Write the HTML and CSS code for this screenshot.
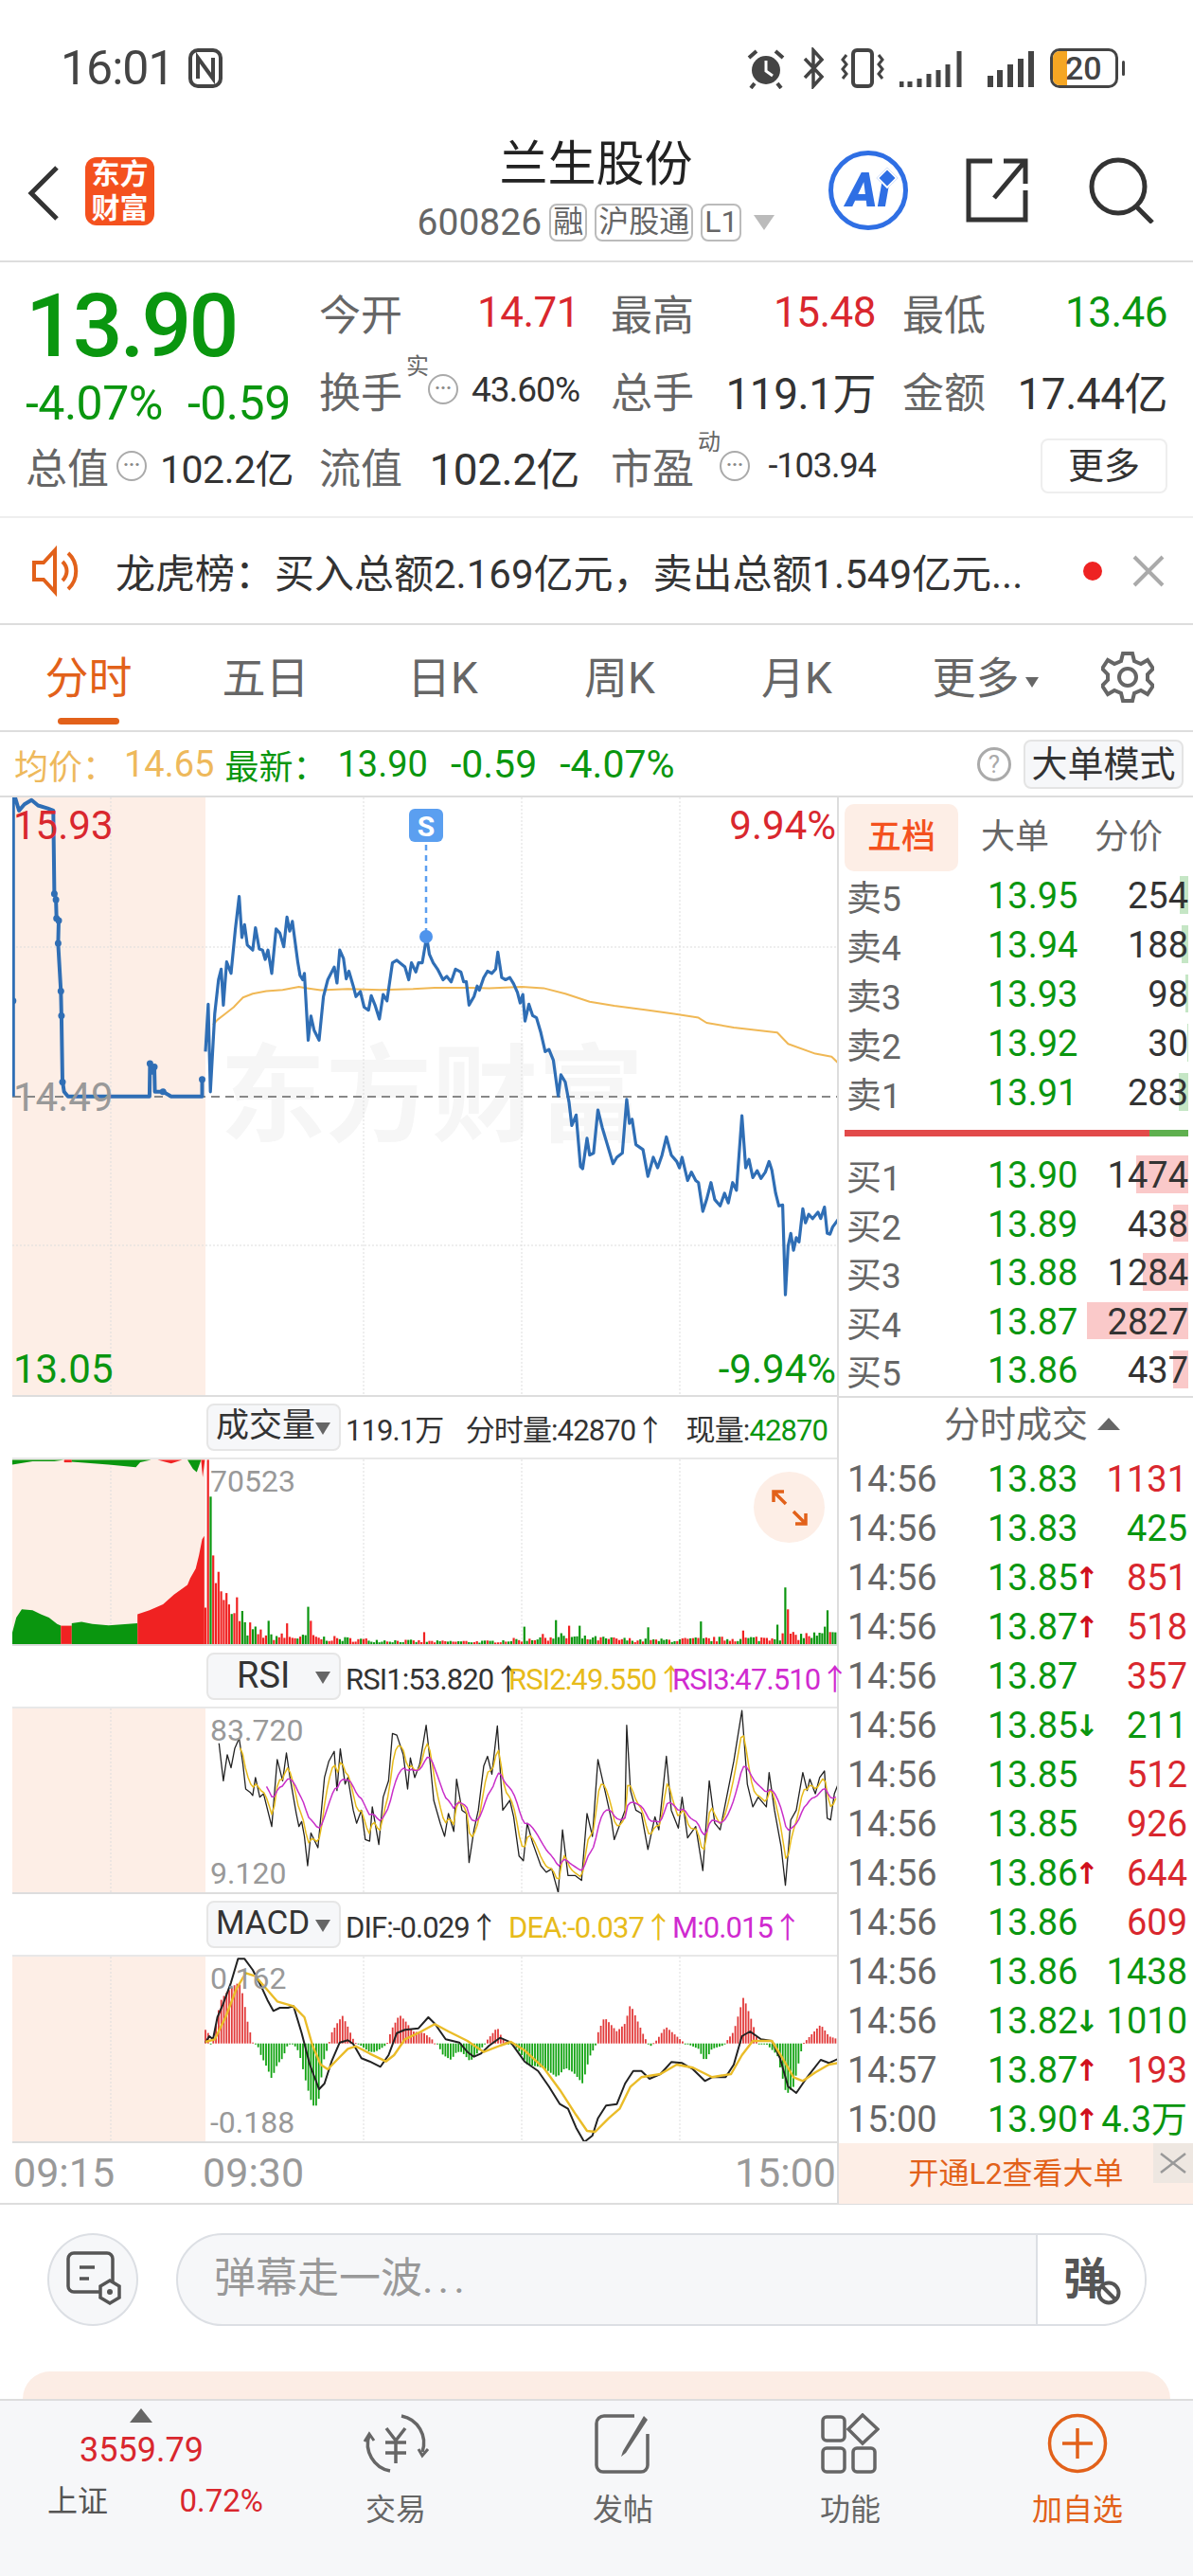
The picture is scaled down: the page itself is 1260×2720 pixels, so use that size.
FILE: index.html
```html
<!DOCTYPE html>
<html lang="zh-CN">
<head>
  <meta charset="UTF-8" />
  <title>兰生股份</title>
  <link rel="stylesheet" href="styles.css">
</head>
<body>

  <div class="statusbar">
    <div class="status-left">
      <span class="clock">16:01</span>
      <svg class="ico" width="36" height="42" viewBox="0 0 36 42"><rect x="2" y="2" width="32" height="38" rx="8" fill="none" stroke="#444" stroke-width="4"/><path d="M10 32V10l16 22V10" fill="none" stroke="#444" stroke-width="4"/></svg>
    </div>
    <div class="status-right">
      <svg width="44" height="44" viewBox="0 0 44 44"><circle cx="22" cy="24" r="15" fill="#444"/><path d="M22 14v11l7 5" fill="none" stroke="#fff" stroke-width="3"/><path d="M4 11l8-7M40 11l-8-7M10 38l-4 5M34 38l4 5" stroke="#444" stroke-width="4"/></svg>
      <svg width="24" height="44" viewBox="0 0 24 44"><path d="M3 12l18 19-9 10V3l9 10-18 19" fill="none" stroke="#444" stroke-width="3.5"/></svg>
      <svg class="vibrate" width="48" height="44" viewBox="0 0 48 44"><rect x="14" y="3" width="20" height="38" rx="4" fill="none" stroke="#444" stroke-width="4"/><path d="M7 8l-4 5 4 5-4 5 4 5-4 5M41 8l4 5-4 5 4 5-4 5 4 5" fill="none" stroke="#444" stroke-width="3"/></svg>
      <svg class="signal" width="68" height="44" viewBox="0 0 68 44"><path d="M2 36v6M11 36v6M21 33v9M31 28v14M41 24v18M51 18v24M63 4v38" stroke="#444" stroke-width="5"/></svg>
      <svg class="signal2" width="50" height="44" viewBox="0 0 50 44"><path d="M3 30v12M13 24v18M24 18v24M35 12v30M46 4v38" stroke="#444" stroke-width="6"/></svg>
      <span class="battery"><span class="battery-fill"></span><span class="battery-num">20</span></span>
      <span class="battery-nub"></span>
    </div>
  </div>

  <header class="topbar">
    <svg class="back" width="34" height="60" viewBox="0 0 34 60"><path d="M31 3L4 30l27 27" fill="none" stroke="#333" stroke-width="5"/></svg>
    <div class="logo">东方<br>财富</div>
    <div class="title">
      <div class="title-name">兰生股份</div>
      <div class="title-sub">
        <span class="code">600826</span>
        <span class="tag">融</span>
        <span class="tag">沪股通</span>
        <span class="tag">L1</span>
        <span class="title-caret"></span>
      </div>
    </div>
    <div class="top-actions">
      <div class="ai">Ai</div>
      <svg class="share" width="66" height="68" viewBox="0 0 66 68"><path d="M28 3H3v62h60V34M30 42L62 4M40 3h23v24" fill="none" stroke="#333" stroke-width="5"/></svg>
      <svg class="search" width="70" height="70" viewBox="0 0 70 70"><circle cx="32" cy="31" r="28" fill="none" stroke="#333" stroke-width="5"/><path d="M51 52l17 17" stroke="#333" stroke-width="5"/></svg>
    </div>
  </header>

  <section class="quote">
    <div class="q-price">13.90</div>
    <div class="q-cell"><span class="q-label">今开</span><span class="q-val red">14.71</span></div>
    <div class="q-cell"><span class="q-label">最高</span><span class="q-val red">15.48</span></div>
    <div class="q-cell"><span class="q-label">最低</span><span class="q-val green">13.46</span></div>

    <div class="q-change"><span>-4.07%</span><span>-0.59</span></div>
    <div class="q-cell">
      <span class="q-label">换手<sup>实</sup></span><span class="dots">···</span><span class="q-val q-small">43.60%</span>
    </div>
    <div class="q-cell"><span class="q-label">总手</span><span class="q-val q-unit">119.1万</span></div>
    <div class="q-cell"><span class="q-label">金额</span><span class="q-val q-unit">17.44亿</span></div>

    <div class="q-cell q-first"><span class="q-label">总值</span><span class="dots dots-tight">···</span><span class="q-val q-mid">102.2亿</span></div>
    <div class="q-cell"><span class="q-label">流值</span><span class="q-val q-unit">102.2亿</span></div>
    <div class="q-cell">
      <span class="q-label">市盈<sup>动</sup></span><span class="dots">···</span><span class="q-val q-tiny">-103.94</span>
    </div>
    <div class="q-more"><button class="more-btn">更多</button></div>
  </section>

  <section class="notice">
    <svg width="54" height="54" viewBox="0 0 54 54"><path d="M4 18h10L26 5v44L14 36H4z" fill="none" stroke="#e2611a" stroke-width="4"/><path d="M34 17c6 6 6 14 0 20M40 8c11 10 11 28 0 38" fill="none" stroke="#e2611a" stroke-width="4"/></svg>
    <span class="notice-text">龙虎榜：买入总额2.169亿元，卖出总额1.549亿元...</span>
    <span class="notice-dot"></span>
    <svg width="34" height="34" viewBox="0 0 34 34"><path d="M2 2l30 30M32 2L2 32" stroke="#aaa" stroke-width="4"/></svg>
  </section>

  <nav class="tabs">
    <div class="tab active">分时</div>
    <div class="tab">五日</div>
    <div class="tab">日K</div>
    <div class="tab">周K</div>
    <div class="tab">月K</div>
    <div class="tab tab-more">更多<span class="tab-caret"></span></div>
    <div class="tab-gear">
      <svg width="56" height="56" viewBox="0 0 56 56"><path d="M23 3h10l2 8 7 3 7-4 6 9-6 6v6l6 6-6 9-7-4-7 3-2 8H23l-2-8-7-3-7 4-6-9 6-6v-6L1 19l6-9 7 4 7-3z" fill="none" stroke="#666" stroke-width="4"/><circle cx="28" cy="28" r="9" fill="none" stroke="#666" stroke-width="4"/></svg>
    </div>
  </nav>

  <div class="inforow">
    <span class="avg">均价：</span><span class="avg avg-num">14.65</span>
    <span class="latest">最新：</span><span class="latest latest-first">13.90</span><span class="latest latest-num">-0.59</span><span class="latest latest-num">-4.07%</span>
    <span class="help">?</span>
    <button class="mode-btn">大单模式</button>
  </div>

  <div class="board">
    <div class="charts">
      <div class="plot-wrap plot-price">
        <svg id="priceChart" class="plot" width="873" height="631"></svg>
        <div class="watermark">东方财富</div>
        <span class="axis big red tl">15.93</span>
        <span class="axis big gray ml">14.49</span>
        <span class="axis big green bl">13.05</span>
        <span class="axis big red tr">9.94%</span>
        <span class="axis big green br">-9.94%</span>
      </div>

      <div class="pane-head">
        <div class="pick">成交量<span class="pick-caret"></span></div>
        <div class="pane-vals spread">
          <span>119.1万</span>
          <span>分时量:42870↑</span>
          <span>现量:<b class="green">42870</b></span>
        </div>
      </div>
      <div class="plot-wrap plot-small">
        <svg id="volChart" class="plot" width="873" height="195"></svg>
        <span class="axis small gray at-top">70523</span>
        <div class="expand">
          <svg width="40" height="40" viewBox="0 0 40 40"><path d="M3 14V3h11M3 3l13 13M37 26v11H26M37 37L24 24" fill="none" stroke="#e2611a" stroke-width="3.5"/></svg>
        </div>
      </div>

      <div class="pane-head">
        <div class="pick pick-wide">RSI<span class="pick-caret"></span></div>
        <div class="pane-vals thirds">
          <span>RSI1:53.820↑</span>
          <span class="c-yellow">RSI2:49.550↑</span>
          <span class="c-magenta">RSI3:47.510↑</span>
        </div>
      </div>
      <div class="plot-wrap plot-rsi">
        <svg id="rsiChart" class="plot" width="873" height="194"></svg>
        <span class="axis small gray at-top">83.720</span>
        <span class="axis small gray at-bottom">9.120</span>
      </div>

      <div class="pane-head">
        <div class="pick">MACD<span class="pick-caret"></span></div>
        <div class="pane-vals thirds">
          <span>DIF:-0.029↑</span>
          <span class="c-yellow">DEA:-0.037↑</span>
          <span class="c-magenta">M:0.015↑</span>
        </div>
      </div>
      <div class="plot-wrap plot-small">
        <svg id="macdChart" class="plot" width="873" height="195"></svg>
        <span class="axis small gray at-top">0.162</span>
        <span class="axis small gray at-bottom">-0.188</span>
      </div>

      <div class="timeline">
        <span>09:15</span>
        <span>09:30</span>
        <span class="timeline-end">15:00</span>
      </div>
    </div>

    <aside class="side">
      <div class="side-tabs">
        <div class="side-tab active">五档</div>
        <div class="side-tab">大单</div>
        <div class="side-tab">分价</div>
      </div>

      <div class="depth depth-sell">
        <div class="depth-row"><span class="depth-bar ask" style="width:9px"></span><span class="d-label">卖5</span><span class="green">13.95</span><span class="d-vol">254</span></div>
        <div class="depth-row"><span class="depth-bar ask" style="width:7px"></span><span class="d-label">卖4</span><span class="green">13.94</span><span class="d-vol">188</span></div>
        <div class="depth-row"><span class="depth-bar ask" style="width:3px"></span><span class="d-label">卖3</span><span class="green">13.93</span><span class="d-vol">98</span></div>
        <div class="depth-row"><span class="depth-bar ask" style="width:1px"></span><span class="d-label">卖2</span><span class="green">13.92</span><span class="d-vol">30</span></div>
        <div class="depth-row"><span class="depth-bar ask" style="width:10px"></span><span class="d-label">卖1</span><span class="green">13.91</span><span class="d-vol">283</span></div>
      </div>

      <div class="ratio"><span class="ratio-buy"></span><span class="ratio-sell"></span></div>

      <div class="depth depth-buy">
        <div class="depth-row"><span class="depth-bar bid" style="width:55px"></span><span class="d-label">买1</span><span class="green">13.90</span><span class="d-vol">1474</span></div>
        <div class="depth-row"><span class="depth-bar bid" style="width:16px"></span><span class="d-label">买2</span><span class="green">13.89</span><span class="d-vol">438</span></div>
        <div class="depth-row"><span class="depth-bar bid" style="width:48px"></span><span class="d-label">买3</span><span class="green">13.88</span><span class="d-vol">1284</span></div>
        <div class="depth-row"><span class="depth-bar bid" style="width:107px"></span><span class="d-label">买4</span><span class="green">13.87</span><span class="d-vol">2827</span></div>
        <div class="depth-row"><span class="depth-bar bid" style="width:16px"></span><span class="d-label">买5</span><span class="green">13.86</span><span class="d-vol">437</span></div>
      </div>

      <div class="trades-head">分时成交<span class="up-caret"></span></div>
      <div class="trades">
        <div class="trade"><span>14:56</span><span class="green">13.83</span><span></span><span class="red">1131</span></div>
        <div class="trade"><span>14:56</span><span class="green">13.83</span><span></span><span class="green">425</span></div>
        <div class="trade"><span>14:56</span><span class="green">13.85</span><span class="arrow up">↑</span><span class="red">851</span></div>
        <div class="trade"><span>14:56</span><span class="green">13.87</span><span class="arrow up">↑</span><span class="red">518</span></div>
        <div class="trade"><span>14:56</span><span class="green">13.87</span><span></span><span class="red">357</span></div>
        <div class="trade"><span>14:56</span><span class="green">13.85</span><span class="arrow down">↓</span><span class="green">211</span></div>
        <div class="trade"><span>14:56</span><span class="green">13.85</span><span></span><span class="red">512</span></div>
        <div class="trade"><span>14:56</span><span class="green">13.85</span><span></span><span class="red">926</span></div>
        <div class="trade"><span>14:56</span><span class="green">13.86</span><span class="arrow up">↑</span><span class="red">644</span></div>
        <div class="trade"><span>14:56</span><span class="green">13.86</span><span></span><span class="red">609</span></div>
        <div class="trade"><span>14:56</span><span class="green">13.86</span><span></span><span class="green">1438</span></div>
        <div class="trade"><span>14:56</span><span class="green">13.82</span><span class="arrow down">↓</span><span class="green">1010</span></div>
        <div class="trade"><span>14:57</span><span class="green">13.87</span><span class="arrow up">↑</span><span class="red">193</span></div>
        <div class="trade"><span>15:00</span><span class="green">13.90</span><span class="arrow up">↑</span><span class="green">4.3万</span></div>
      </div>

      <div class="l2bar">
        开通L2查看大单
        <span class="l2close"><svg width="30" height="24" viewBox="0 0 30 24"><path d="M2 2l26 20M28 2L2 22" stroke="#999" stroke-width="2.5"/></svg></span>
      </div>
    </aside>
  </div>

  <div class="danmu">
    <div class="danmu-set">
      <svg width="60" height="62" viewBox="0 0 60 62"><path d="M44 44H10a6 6 0 0 1-6-6V9a6 6 0 0 1 6-6h35a6 6 0 0 1 6 6v24" fill="none" stroke="#555" stroke-width="3.5"/><path d="M16 18h16M16 30h10" stroke="#555" stroke-width="3.5"/><path d="M48 32l10 6v12l-10 6-10-6V38z" fill="#f6f7f9" stroke="#555" stroke-width="3.5"/><circle cx="48" cy="44" r="3" fill="#555"/></svg>
    </div>
    <div class="danmu-input">
      <span class="danmu-hint">弹幕走一波<span class="danmu-dots">...</span></span>
      <span class="danmu-send">弹<svg class="danmu-off" width="26" height="26" viewBox="0 0 26 26"><circle cx="13" cy="13" r="10.5" fill="#fff" stroke="#555" stroke-width="4"/><path d="M6 6l14 14" stroke="#555" stroke-width="4"/></svg></span>
    </div>
  </div>

  <div class="peek"></div>

  <footer class="bottombar">
    <div class="index">
      <span class="index-caret"></span>
      <div class="index-val">3559.79</div>
      <div class="index-row"><span class="index-name">上证</span><span class="index-pct">0.72%</span></div>
    </div>
    <div class="act">
      <svg width="72" height="64" viewBox="0 0 72 64"><path d="M42 3a29 29 0 0 1 22 38M30 61A29 29 0 0 1 8 23" fill="none" stroke="#666" stroke-width="3.5"/><path d="M3 30l5-8 5 7M60 38l4 7 6-7" fill="none" stroke="#666" stroke-width="3"/><path d="M26 16l10 13 10-13M25 31h22M25 42h22M36 29v24" fill="none" stroke="#666" stroke-width="3.5"/></svg>
      <span>交易</span>
    </div>
    <div class="act">
      <svg width="64" height="64" viewBox="0 0 64 64"><path d="M44 3H12a8 8 0 0 0-8 8v44a7 7 0 0 0 7 7h40a7 7 0 0 0 7-7V22" fill="none" stroke="#666" stroke-width="3.5"/><path d="M54 3L32 40l-2 6 5-4L58 7z" fill="#666"/></svg>
      <span>发帖</span>
    </div>
    <div class="act">
      <svg width="62" height="64" viewBox="0 0 62 64"><rect x="2" y="4" width="23" height="25" rx="4" fill="none" stroke="#666" stroke-width="3.5"/><path d="M44 2l16 15-16 15-15-15z" fill="none" stroke="#666" stroke-width="3.5"/><rect x="2" y="37" width="23" height="25" rx="4" fill="none" stroke="#666" stroke-width="3.5"/><rect x="34" y="37" width="23" height="25" rx="4" fill="none" stroke="#666" stroke-width="3.5"/></svg>
      <span>功能</span>
    </div>
    <div class="act act-add">
      <svg width="64" height="64" viewBox="0 0 64 64"><circle cx="32" cy="32" r="29.5" fill="none" stroke="#e2611a" stroke-width="3.5"/><path d="M32 16v32M16 32h32" stroke="#e2611a" stroke-width="3.5"/></svg>
      <span>加自选</span>
    </div>
  </footer>

  <script src="chart.js"></script>
</body>
</html>
```

FILE: styles.css
```css
* {
  box-sizing: border-box;
}

html, body {
  margin: 0;
  background: #fff;
}

body {
  width: 1260px;
  height: 2720px;
  overflow: hidden;
  font-family: Roboto, "Noto Sans CJK SC", sans-serif;
  color: #333;
}

button {
  font-family: inherit;
  color: #333;
  padding: 0;
}

.red { color: #d9272e; }
.green { color: #0a960f; }
.gray { color: #999; }
.c-yellow { color: #e7bb1b; }
.c-magenta { color: #d02ad0; }

/* status bar */
.statusbar {
  height: 144px;
  padding: 50px 72px 0 64px;
  display: flex;
  justify-content: space-between;
  align-items: flex-start;
  color: #444;
}

.status-left, .status-right {
  display: flex;
  align-items: center;
}

.clock {
  font-size: 50px;
  line-height: 44px;
  letter-spacing: -1px;
}

.status-left .ico { margin-left: 15px; }

.status-right svg { margin-right: 16px; }
.status-right .vibrate { margin-right: 15px; }
.status-right .signal { margin-right: 25px; }

.battery {
  position: relative;
  width: 72px;
  height: 42px;
  border: 3px solid #444;
  border-radius: 10px;
  overflow: hidden;
}

.battery-fill {
  position: absolute;
  left: 0;
  top: 0;
  bottom: 0;
  width: 15px;
  background: #f5a623;
}

.battery-num {
  position: absolute;
  left: 13px;
  top: 0;
  font-size: 34px;
  line-height: 36px;
  font-weight: 500;
}

.battery-nub {
  width: 3px;
  height: 16px;
  background: #444;
  margin-left: 4px;
  border-radius: 2px;
}

/* header */
.topbar {
  position: relative;
  height: 133px;
  border-bottom: 2px solid #ddd;
  display: flex;
  align-items: flex-start;
  padding-left: 29px;
}

.back { margin-top: 30px; }

.logo {
  margin: 22px 0 0 27px;
  width: 73px;
  height: 72px;
  background: #f4511e;
  border-radius: 12px;
  color: #fff;
  font-size: 30px;
  line-height: 36px;
  font-weight: 700;
  text-align: center;
}

.title {
  flex: 1;
  text-align: center;
  padding-right: 164px;
}

.title-name {
  font-size: 51px;
  line-height: 60px;
  color: #222;
}

.title-sub {
  display: flex;
  justify-content: center;
  align-items: center;
  margin-top: 11px;
  gap: 8px;
  color: #666;
}

.code {
  font-size: 39px;
  line-height: 40px;
}

.tag {
  font-size: 32px;
  line-height: 35px;
  height: 40px;
  padding: 0 2px;
  border: 2px solid #bbb;
  border-radius: 8px;
  color: #666;
}

.title-caret {
  width: 0;
  height: 0;
  border-left: 11px solid transparent;
  border-right: 11px solid transparent;
  border-top: 16px solid #bbb;
  margin-left: 5px;
}

.top-actions {
  position: absolute;
  right: 41px;
  top: 15px;
  display: flex;
  align-items: center;
}

.ai {
  position: relative;
  width: 84px;
  height: 84px;
  border: 5px solid #2f6fe4;
  border-radius: 50%;
  color: #2f6fe4;
  font-size: 50px;
  line-height: 74px;
  font-weight: 900;
  font-style: italic;
  text-align: center;
}

.ai::after {
  content: "";
  position: absolute;
  left: 49px;
  top: 16px;
  width: 12px;
  height: 12px;
  background: #2f6fe4;
  border: 2px solid #fff;
  box-sizing: content-box;
  transform: rotate(45deg);
}

.share { margin-left: 61px; }
.search { margin-left: 63px; }

/* quote block */
.quote {
  height: 270px;
  padding: 12px 27px 0 27px;
  border-bottom: 2px solid #eee;
  display: grid;
  grid-template-columns: 310px 308px 308px 280px;
  grid-template-rows: 82px 81px 80px;
}

.q-price {
  color: #0a960f;
  font-size: 93px;
  line-height: 82px;
  font-weight: 500;
  letter-spacing: -3px;
  padding-top: 15px;
  height: 82px;
}

.q-change {
  display: flex;
  justify-content: flex-start;
  gap: 26px;
  padding-top: 24px;
  color: #0a960f;
  font-size: 50px;
  letter-spacing: -.5px;
  line-height: 62px;
  white-space: nowrap;
}

.q-cell {
  display: flex;
  align-items: center;
  justify-content: space-between;
  padding-right: 33px;
  position: relative;
  white-space: nowrap;
}

.q-cell:nth-child(4n+3) { padding-right: 28px; }
.q-cell:nth-child(4n) { padding-right: 0; }
.q-cell.q-first { padding-right: 27px; }

.q-label {
  font-size: 44px;
  color: #666;
  position: relative;
}

.q-label sup {
  position: absolute;
  left: 92px;
  top: -6px;
  font-size: 24px;
  line-height: 26px;
}

.q-val {
  font-size: 44px;
  letter-spacing: -.5px;
  color: #333;
}

.q-val.red { color: #d9272e; }
.q-val.green { color: #0a960f; }

.q-unit { font-size: 46px; }
.q-small { font-size: 37px; letter-spacing: -1px; }
.q-mid { font-size: 41px; }
.q-tiny { font-size: 36px; letter-spacing: -1px; }

.dots {
  position: absolute;
  left: 115px;
  top: 24px;
  width: 32px;
  height: 32px;
  border: 2px solid #aaa;
  border-radius: 50%;
  color: #888;
  font-size: 20px;
  line-height: 24px;
  text-align: center;
  font-weight: 700;
}

.dots-tight { left: 96px; }

.q-more {
  display: flex;
  justify-content: flex-end;
  align-items: center;
}

.more-btn {
  width: 134px;
  height: 58px;
  background: #fff;
  border: 2px solid #eee;
  border-radius: 8px;
  font-size: 38px;
  line-height: 50px;
}

/* notice */
.notice {
  height: 113px;
  padding: 0 30px 0 32px;
  border-bottom: 2px solid #ddd;
  display: flex;
  align-items: center;
}

.notice-text {
  margin-left: 36px;
  flex: 1;
  font-size: 42px;
  color: #333;
  white-space: nowrap;
}

.notice-dot {
  width: 20px;
  height: 20px;
  background: #ee2222;
  border-radius: 50%;
  margin-right: 32px;
}

/* tabs */
.tabs {
  height: 113px;
  border-bottom: 2px solid #ddd;
  display: flex;
}

.tab {
  position: relative;
  width: 187px;
  text-align: center;
  font-size: 46px;
  line-height: 112px;
  color: #666;
}

.tab.active { color: #e2611a; }

.tab.active::after {
  content: "";
  position: absolute;
  left: 61px;
  bottom: 6px;
  width: 65px;
  height: 7px;
  border-radius: 4px;
  background: #e2611a;
}

.tab-more { padding-left: 24px; }

.tab-caret {
  display: inline-block;
  width: 0;
  height: 0;
  margin-left: 6px;
  vertical-align: 6px;
  border-left: 7px solid transparent;
  border-right: 7px solid transparent;
  border-top: 11px solid #666;
}

.tab-gear {
  flex: 1;
  display: flex;
  align-items: center;
  justify-content: center;
  padding-bottom: 2px;
}

/* info row */
.inforow {
  height: 67px;
  padding: 0 10px 0 15px;
  display: flex;
  align-items: center;
  font-size: 38px;
  white-space: nowrap;
}

.avg:first-child, .latest:nth-child(3) { font-size: 36px; }

.avg { color: #eeb95c; }
.avg-num { margin-left: 8px; margin-right: 11px; }
.latest { color: #0a960f; }
.latest-first { margin-left: 11px; }
.latest-num { margin-left: 24px; font-size: 41px; }

.help {
  margin-left: auto;
  width: 36px;
  height: 36px;
  border: 3px solid #aaa;
  border-radius: 50%;
  color: #aaa;
  font-size: 26px;
  line-height: 30px;
  text-align: center;
}

.mode-btn {
  margin-left: 13px;
  width: 169px;
  height: 52px;
  background: #f6f7f9;
  border: 2px solid #e4e4e4;
  border-radius: 8px;
  font-size: 38px;
  line-height: 46px;
  white-space: nowrap;
}

/* charts */
.board {
  height: 1488px;
  display: flex;
  border-top: 2px solid #ddd;
  border-bottom: 2px solid #ddd;
}

.charts {
  width: 886px;
  padding-left: 13px;
  border-right: 2px solid #ddd;
}

.plot-wrap {
  position: relative;
  overflow: hidden;
  isolation: isolate;
}

.plot-price { height: 631px; }
.plot-small { height: 195px; }
.plot-rsi { height: 194px; }

.plot {
  display: block;
}

.watermark {
  position: absolute;
  left: 219px;
  top: 252px;
  font-size: 112px;
  line-height: 130px;
  font-weight: 700;
  color: #f6f6f6;
  z-index: -1;
  white-space: nowrap;
}

.axis {
  position: absolute;
  white-space: nowrap;
}

.axis.big {
  font-size: 42px;
  line-height: 50px;
}

.axis.small {
  left: 209px;
  font-size: 32px;
  line-height: 40px;
}

.tl { left: 1px; top: 5px; }
.ml { left: 1px; top: 292px; }
.bl { left: 1px; top: 579px; }
.tr { right: 1px; top: 5px; }
.br { right: 1px; top: 579px; }
.at-top { top: 3px; }
.at-bottom { bottom: 0; }

.expand {
  position: absolute;
  right: 13px;
  top: 13px;
  width: 75px;
  height: 75px;
  border-radius: 50%;
  background: #fdeee6;
  display: flex;
  align-items: center;
  justify-content: center;
}

.pane-head {
  height: 68px;
  display: flex;
  align-items: center;
  padding-left: 205px;
  border-top: 2px solid #ddd;
  border-bottom: 2px solid #e8e8e8;
}

.pick {
  position: relative;
  width: 142px;
  height: 50px;
  flex: none;
  background: #f6f7f9;
  border: 2px solid #e6e6e6;
  border-radius: 8px;
  font-size: 35px;
  line-height: 44px;
  padding-left: 8px;
  color: #333;
}

.pick-wide {
  padding-left: 30px;
  font-size: 38px;
}

.pick-caret {
  position: absolute;
  right: 9px;
  top: 18px;
  width: 0;
  height: 0;
  border-left: 8px solid transparent;
  border-right: 8px solid transparent;
  border-top: 13px solid #666;
}

.pane-vals {
  flex: 1;
  margin-left: 5px;
  padding-right: 10px;
  font-size: 31px;
  letter-spacing: -.9px;
  white-space: nowrap;
  color: #333;
}

.pane-vals b { font-weight: 400; }

.spread {
  display: flex;
  justify-content: space-between;
}

.thirds {
  display: grid;
  grid-template-columns: 172px 173px 1fr;
}

.timeline {
  height: 66px;
  position: relative;
  display: flex;
  gap: 93px;
  border-top: 2px solid #ddd;
  font-size: 43px;
  line-height: 62px;
  color: #999;
  padding-left: 1px;
}

.timeline-end { margin-left: auto; padding-right: 1px; }

/* right panel */
.side {
  flex: 1;
  font-size: 38px;
  position: relative;
  padding-top: 7px;
}

.side-tabs {
  display: flex;
  margin-left: 6px;
  height: 71px;
}

.side-tab {
  width: 120px;
  text-align: center;
  font-size: 36px;
  line-height: 71px;
  color: #666;
  border-radius: 10px;
}

.side-tab.active {
  background: #fdeee6;
  color: #f4511e;
  font-weight: 500;
}

.depth-sell { margin-top: -1px; }

.depth-row {
  position: relative;
  height: 52px;
  display: grid;
  grid-template-columns: 149px 1fr 100px;
  align-items: center;
  padding-left: 8px;
  padding-right: 5px;
}

.depth-buy .depth-row { height: 51.5px; }

.d-label {
  color: #666;
  font-size: 37px;
}

.d-vol {
  color: #333;
  text-align: right;
  position: relative;
}

.depth-bar {
  position: absolute;
  right: 5px;
  top: 6px;
  bottom: 6px;
}

.depth-bar.ask { background: #c5e6c5; }
.depth-bar.bid { background: #fac9c9; }

.ratio {
  display: flex;
  height: 7px;
  margin: 14px 5px 14px 6px;
}

.ratio-buy {
  width: 322px;
  background: #e24a4a;
}

.ratio-sell {
  flex: 1;
  background: #5fb04f;
}

.trades-head {
  height: 62px;
  border-top: 2px solid #ddd;
  margin-top: 2px;
  text-align: center;
  font-size: 38px;
  line-height: 56px;
  color: #666;
  padding-left: 34px;
}

.up-caret {
  display: inline-block;
  width: 0;
  height: 0;
  margin-left: 10px;
  vertical-align: 7px;
  border-left: 12px solid transparent;
  border-right: 12px solid transparent;
  border-bottom: 13px solid #666;
}

.trades { margin-bottom: -1px; }

.trade {
  height: 52px;
  display: grid;
  grid-template-columns: 148px 92px 24px 1fr;
  align-items: center;
  padding: 0 6px 0 9px;
  color: #666;
  line-height: 52px;
}

.trade span:last-child { text-align: right; }

.arrow {
  font-family: "DejaVu Sans", sans-serif;
  font-size: 31px;
  font-weight: 700;
}

.arrow.up { color: #d0101c; }
.arrow.down { color: #0a960f; }

.l2bar {
  position: relative;
  height: 64px;
  background: #fdeee6;
  color: #e2611a;
  font-size: 32px;
  line-height: 64px;
  text-align: center;
  white-space: nowrap;
}

.l2close {
  position: absolute;
  right: 0;
  top: 0;
  width: 42px;
  height: 42px;
  background: #eee7e1;
  display: flex;
  align-items: center;
  justify-content: center;
}

/* danmu */
.danmu {
  margin-top: 30px;
  padding: 0 49px 0 50px;
  display: flex;
  gap: 40px;
}

.danmu-set {
  width: 96px;
  height: 98px;
  flex: none;
  background: #f6f7f9;
  border: 2px solid #dcdfe4;
  border-radius: 50%;
  display: flex;
  align-items: center;
  justify-content: center;
}

.danmu-input {
  flex: 1;
  height: 98px;
  background: #f6f7f9;
  border: 2px solid #dcdfe4;
  border-radius: 49px;
  display: flex;
  overflow: hidden;
}

.danmu-hint {
  flex: 1;
  padding-left: 38px;
  font-size: 44px;
  line-height: 92px;
  color: #999;
}

.danmu-dots { letter-spacing: 5px; }

.danmu-send {
  position: relative;
  width: 115px;
  background: #fff;
  border-left: 2px solid #dcdfe4;
  font-size: 46px;
  line-height: 92px;
  font-weight: 700;
  color: #555;
  padding-left: 27px;
}

.danmu-off {
  position: absolute;
  left: 62px;
  top: 48px;
}

.peek {
  height: 29px;
  margin: 48px 24px 0;
  background: #fcede5;
  border-radius: 40px 40px 0 0;
}

/* bottom nav */
.bottombar {
  height: 187px;
  background: #f6f7f9;
  border-top: 2px solid #ddd;
  display: flex;
}

.index {
  width: 298px;
  padding-left: 50px;
  position: relative;
}

.index-caret {
  position: absolute;
  left: 137px;
  top: 8px;
  width: 0;
  height: 0;
  border-left: 12px solid transparent;
  border-right: 12px solid transparent;
  border-bottom: 15px solid #666;
}

.index-val {
  color: #d9272e;
  font-size: 36px;
  line-height: 44px;
  margin-top: 30px;
  padding-left: 34px;
}

.index-row {
  display: flex;
  justify-content: space-between;
  width: 228px;
  margin-top: 8px;
  align-items: center;
  line-height: 48px;
}

.index-name {
  font-size: 32px;
  color: #555;
}

.index-pct {
  font-size: 33px;
  color: #d9272e;
}

.act {
  width: 240px;
  display: flex;
  flex-direction: column;
  align-items: center;
  padding-top: 13px;
  font-size: 32px;
  line-height: 44px;
  color: #666;
}

.act span { margin-top: 16px; }

.act-add { color: #e2611a; }
```

FILE: chart.js
```js
// pane traces, in crop coordinates so they can be checked against the source shot
const NS = 'http://www.w3.org/2000/svg';
const PLOT_W = 873;
const OPEN_X = 204;
const GRID_X = [104, 371, 538, 705];
const X_SCALE = 1.742;

function el(svg, tag, attrs, text) {
  const n = document.createElementNS(NS, tag);
  for (const k in attrs) n.setAttribute(k, attrs[k]);
  if (text) n.textContent = text;
  svg.appendChild(n);
  return n;
}

function mapper(yScale, offset) {
  return (p) => [(p[0] / X_SCALE - 13).toFixed(1), (p[1] / yScale + offset).toFixed(1)];
}

function line(svg, pts, map, color, width) {
  el(svg, 'polyline', {
    points: pts.map(p => map(p).join(',')).join(' '),
    fill: 'none', stroke: color, 'stroke-width': width, 'stroke-linejoin': 'round'
  });
}

function backdrop(svg, h) {
  el(svg, 'rect', { x: 0, y: 0, width: OPEN_X, height: h, fill: '#fdeee6' });
  GRID_X.forEach(x => el(svg, 'line', {
    x1: x, x2: x, y1: 0, y2: h, stroke: '#ddd', 'stroke-dasharray': '2 2'
  }));
}

function lerp(pts, x) {
  for (let i = 1; i < pts.length; i++) {
    if (x <= pts[i][0]) {
      const a = pts[i - 1], b = pts[i];
      return a[1] + (b[1] - a[1]) * (x - a[0]) / (b[0] - a[0]);
    }
  }
  return pts[pts.length - 1][1];
}

let seed = 7;
function rnd() {
  seed = (seed * 16807) % 2147483647;
  return seed / 2147483647;
}

/* ---- price ---- */
const preMarket = [[24,846],[24,140],[28,140],[35,170],[45,155],[58,145],[70,158],[88,165],[98,170],[100,365],[103,380],[104,425],[108,430],[107,485],[112,597],[113,655],[115,810],[118,835],[125,846],[275,846],[276,768],[280,790],[284,775],[285,835],[300,835],[315,846],[372,846],[372,806]];
const preDots = [[24,620],[100,367],[103,381],[104,425],[108,430],[107,484],[112,597],[113,655],[115,812],[276,768],[284,776],[300,835],[372,806]];
const price = [[378,740],[383,628],[387,835],[395,650],[402,570],[407,545],[411,630],[417,528],[425,555],[433,450],[440,373],[445,470],[450,440],[455,488],[465,500],[470,447],[477,497],[483,500],[488,522],[493,500],[500,555],[508,450],[515,460],[522,492],[528,422],[533,455],[538,432],[548,530],[552,560],[557,570],[560,555],[567,713],[572,656],[578,690],[587,713],[595,610],[603,570],[615,540],[620,578],[625,500],[632,520],[637,568],[642,550],[650,585],[655,610],[663,598],[670,635],[678,642],[683,608],[690,630],[698,663],[705,605],[712,620],[722,530],[730,524],[745,540],[752,570],[757,530],[765,552],[770,530],[777,530],[785,468],[790,510],[797,530],[805,545],[815,570],[822,562],[830,575],[838,545],[848,552],[853,575],[858,575],[863,630],[872,610],[878,585],[882,595],[890,565],[897,550],[905,555],[912,545],[916,505],[923,565],[930,570],[938,565],[945,580],[952,600],[957,625],[962,605],[966,668],[973,628],[980,655],[987,660],[995,695],[1003,740],[1010,735],[1018,760],[1027,845],[1032,795],[1040,812],[1047,860],[1052,915],[1060,890],[1068,1012],[1072,1017],[1080,945],[1085,985],[1092,980],[1100,878],[1108,920],[1115,950],[1122,980],[1128,1005],[1135,990],[1145,980],[1153,853],[1158,910],[1163,900],[1170,960],[1183,972],[1192,1035],[1202,990],[1210,1015],[1218,985],[1226,942],[1235,985],[1245,1000],[1250,1015],[1255,990],[1265,1045],[1272,1025],[1280,1045],[1285,1050],[1293,1118],[1300,1090],[1308,1050],[1315,1090],[1325,1105],[1333,1075],[1340,1098],[1348,1050],[1355,1068],[1365,892],[1372,1015],[1378,995],[1385,1038],[1393,1022],[1400,1040],[1408,1025],[1415,1000],[1420,1020],[1427,1075],[1433,1105],[1440,1103],[1445,1315],[1450,1200],[1455,1170],[1460,1210],[1465,1180],[1470,1190],[1477,1112],[1482,1145],[1488,1125],[1495,1135],[1505,1120],[1510,1135],[1517,1108],[1522,1170],[1527,1172],[1532,1155],[1542,1137]];
const avgPrice = [[392,677],[400,665],[415,650],[430,635],[447,612],[465,603],[490,597],[520,594],[550,587],[565,590],[590,595],[640,592],[700,594],[760,592],[800,589],[860,589],[900,590],[960,587],[1000,590],[1040,603],[1085,622],[1130,632],[1190,642],[1240,651],[1285,660],[1300,672],[1350,683],[1430,695],[1450,722],[1500,745],[1530,752],[1542,767]];

(function drawPrice() {
  const svg = document.getElementById('priceChart');
  const map = mapper(2.24, -62);
  backdrop(svg, 631);
  [158, 473].forEach(y => el(svg, 'line', {
    x1: 0, x2: PLOT_W, y1: y, y2: y, stroke: '#ddd', 'stroke-dasharray': '2 2'
  }));
  el(svg, 'line', {
    x1: 0, x2: PLOT_W, y1: 316, y2: 316, stroke: '#888', 'stroke-width': 2, 'stroke-dasharray': '9 6'
  });
  line(svg, avgPrice, map, '#f0b855', 2);
  line(svg, preMarket, map, '#2f6eb5', 4);
  line(svg, price, map, '#2f6eb5', 3.2);
  preDots.forEach(p => {
    const m = map(p);
    el(svg, 'circle', { cx: m[0], cy: m[1], r: 3.5, fill: '#2f6eb5' });
  });
  // the "S" marker
  el(svg, 'line', { x1: 437, x2: 437, y1: 50, y2: 145, stroke: '#5b9ff0', 'stroke-width': 2.5, 'stroke-dasharray': '6 5' });
  el(svg, 'circle', { cx: 437, cy: 147, r: 7, fill: '#4f94ec' });
  el(svg, 'rect', { x: 419, y: 12, width: 36, height: 35, rx: 6, fill: '#5b9ff0' });
  el(svg, 'text', { x: 437, y: 41, 'text-anchor': 'middle', 'font-size': 30, 'font-weight': 700, fill: '#fff', 'font-family': 'Roboto, sans-serif' }, 'S');
})();

/* ---- volume ---- */
const RED = '#f02222';
const GREEN = '#0a960f';
const preShapes = [
  [GREEN, [[22,771],[22,740],[30,690],[40,665],[60,668],[75,680],[90,690],[105,710],[112,715],[112,771]]],
  [RED, [[112,771],[112,715],[132,715],[132,771]]],
  [GREEN, [[132,771],[132,708],[150,703],[170,710],[200,714],[253,708],[253,771]]],
  [RED, [[253,771],[253,680],[275,668],[300,650],[320,620],[345,590],[350,570],[360,540],[366,500],[372,450],[376,440],[376,771]]],
  [GREEN, [[22,207],[22,222],[60,212],[100,212],[118,207]]],
  [RED, [[118,207],[118,215],[132,215],[132,207]]],
  [GREEN, [[132,207],[132,213],[200,222],[250,230],[258,215],[278,207]]],
  [RED, [[290,207],[315,218],[335,207]]],
  [GREEN, [[345,207],[355,235],[362,245],[370,207]]],
  [RED, [[370,207],[373,260],[377,207]]]
];
const volEnvelope = [[378,400],[400,560],[420,640],[450,700],[500,735],[600,745],[700,755],[800,760],[900,760],[960,750],[1020,735],[1080,745],[1200,755],[1280,750],[1400,745],[1440,735],[1542,730]];
const volSpikes = [[372,395,RED],[383,207,RED],[387,320,GREEN],[393,500,RED],[400,550,RED],[405,610,RED],[415,615,RED],[422,650,RED],[437,628,RED],[445,670,GREEN],[460,705,RED],[495,700,GREEN],[528,708,RED],[567,657,GREEN],[572,700,RED],[780,735,RED],[965,718,GREEN],[1022,698,GREEN],[1045,715,RED],[1065,715,GREEN],[1192,720,GREEN],[1290,702,GREEN],[1365,730,RED],[1430,712,GREEN],[1445,598,GREEN],[1450,665,RED],[1517,718,GREEN],[1525,668,GREEN],[1540,430,RED]];

(function drawVolume() {
  const svg = document.getElementById('volChart');
  const map = mapper(2.9, -71);
  backdrop(svg, 195);
  preShapes.forEach(([color, pts]) => {
    el(svg, 'polygon', { points: pts.map(p => map(p).join(',')).join(' '), fill: color });
  });
  for (let i = 0; i < 240; i++) {
    const zx = 378 + i * 4.85;
    const env = lerp(volEnvelope, zx);
    let top = 771 - (771 - env) * (0.3 + 0.7 * rnd());
    let color = i < 10 || rnd() < 0.45 ? RED : GREEN;
    const spike = volSpikes.find(s => Math.abs(s[0] - zx) <= 2.43);
    if (spike) { top = spike[1]; color = spike[2]; }
    const a = map([zx, top]);
    el(svg, 'rect', { x: a[0] - 1.2, y: a[1], width: 2.2, height: 195 - a[1], fill: color });
  }
})();

/* ---- rsi ---- */
const rsi1 = [[403,1075],[411,1190],[418,1110],[425,1150],[432,1090],[440,1060],[447,1140],[452,1215],[460,1225],[465,1235],[470,1180],[478,1240],[485,1230],[500,1330],[510,1125],[520,1190],[527,1105],[533,1175],[545,1290],[550,1330],[555,1315],[560,1360],[566,1450],[572,1350],[585,1395],[597,1180],[605,1130],[615,1100],[620,1220],[626,1092],[635,1200],[640,1180],[650,1280],[656,1320],[665,1280],[672,1370],[680,1375],[685,1270],[697,1385],[705,1240],[715,1190],[722,1045],[730,1050],[742,1110],[750,1215],[755,1120],[763,1180],[772,1140],[784,1020],[790,1110],[798,1250],[810,1320],[818,1360],[825,1290],[835,1345],[840,1185],[850,1280],[858,1290],[863,1440],[872,1340],[880,1280],[890,1145],[897,1115],[905,1170],[915,1022],[925,1280],[938,1250],[945,1300],[955,1420],[963,1435],[970,1320],[980,1380],[995,1450],[1005,1470],[1015,1460],[1027,1533],[1035,1340],[1045,1480],[1058,1480],[1070,1495],[1080,1290],[1090,1360],[1100,1125],[1113,1220],[1125,1310],[1130,1370],[1150,1280],[1153,1020],[1160,1220],[1170,1280],[1180,1290],[1192,1400],[1205,1300],[1212,1340],[1226,1115],[1235,1280],[1248,1335],[1255,1240],[1265,1365],[1280,1330],[1293,1465],[1305,1190],[1315,1320],[1325,1340],[1350,1130],[1365,975],[1375,1200],[1385,1270],[1395,1240],[1410,1270],[1415,1165],[1425,1280],[1437,1390],[1445,1510],[1455,1310],[1465,1280],[1477,1165],[1485,1220],[1490,1185],[1500,1230],[1508,1180],[1517,1160],[1522,1305],[1528,1310],[1535,1230],[1542,1200]];

function ema(pts, alpha, fromX, start) {
  const out = [];
  let v = start;
  for (let x = pts[0][0]; x <= 1542; x += 4.85) {
    v += (lerp(pts, x) - v) * alpha;
    if (x >= fromX) out.push([x, v]);
  }
  return out;
}

(function drawRsi() {
  const svg = document.getElementById('rsiChart');
  const map = mapper(2.9, -334);
  backdrop(svg, 194);
  line(svg, rsi1, map, '#222', 1.3);
  line(svg, ema(rsi1, 0.42, 437, 1080), map, '#e7bb1b', 1.5);
  line(svg, ema(rsi1, 0.16, 490, 1150), map, '#c92fc9', 1.5);
})();

/* ---- macd ---- */
const hist = [[378,460],[383,470],[385,510],[390,503],[395,470],[405,370],[415,345],[430,320],[440,310],[447,350],[455,430],[465,500],[470,503],[473,505],[480,540],[490,575],[500,615],[510,570],[520,550],[530,505],[540,505],[550,530],[565,640],[575,700],[585,700],[595,560],[605,505],[610,470],[620,440],[630,415],[640,450],[650,490],[655,503],[660,505],[680,530],[690,530],[705,515],[712,505],[720,460],[735,412],[745,430],[760,465],[780,470],[795,490],[800,503],[805,505],[815,540],[830,555],[840,530],[850,530],[865,560],[880,530],[890,510],[895,495],[915,452],[925,490],[935,503],[945,505],[960,540],[970,570],[1000,580],[1025,610],[1040,580],[1055,595],[1072,630],[1085,545],[1097,505],[1100,470],[1112,420],[1125,445],[1135,465],[1150,440],[1160,378],[1170,420],[1185,480],[1192,503],[1197,512],[1201,503],[1205,500],[1225,450],[1245,480],[1260,503],[1265,505],[1285,520],[1297,560],[1310,520],[1330,510],[1335,500],[1350,465],[1368,355],[1385,440],[1395,503],[1410,505],[1430,540],[1447,665],[1460,640],[1477,505],[1485,490],[1510,443],[1525,480],[1542,490]];
const dif = [[378,500],[385,480],[392,490],[400,420],[410,380],[425,310],[438,235],[450,235],[465,270],[480,320],[492,365],[503,400],[515,390],[530,390],[540,385],[555,470],[570,570],[587,648],[597,630],[610,560],[625,500],[640,493],[650,505],[665,550],[680,560],[700,577],[715,540],[730,470],[745,460],[770,455],[788,420],[800,440],[820,490],[845,500],[860,530],[872,545],[885,535],[900,510],[920,485],[940,500],[965,560],[990,590],[1010,640],[1030,695],[1045,710],[1060,770],[1075,815],[1090,795],[1100,740],[1115,700],[1135,695],[1150,630],[1165,590],[1180,590],[1195,615],[1215,600],[1235,562],[1255,565],[1275,585],[1297,622],[1310,610],[1335,610],[1350,570],[1365,480],[1380,465],[1400,490],[1420,495],[1435,550],[1450,640],[1465,660],[1485,610],[1510,555],[1525,565],[1542,552]];
const dea = [[378,498],[395,490],[415,420],[435,330],[452,280],[470,290],[490,330],[510,370],[540,385],[560,420],[575,510],[590,570],[603,585],[620,555],[640,520],[655,512],[680,535],[710,560],[725,540],[745,490],[775,465],[800,442],[825,465],[860,495],[890,530],[920,510],[940,498],[965,525],[1000,580],[1030,650],[1060,730],[1080,780],[1095,783],[1120,740],[1140,710],[1160,640],[1180,610],[1215,600],[1245,570],[1275,580],[1310,610],[1345,600],[1365,540],[1385,495],[1420,495],[1440,550],[1460,610],[1477,622],[1500,595],[1525,570],[1542,565]];

(function drawMacd() {
  const svg = document.getElementById('macdChart');
  const map = mapper(3, -76);
  const zero = map([0, 503])[1];
  backdrop(svg, 195);
  for (let i = 0; i < 240; i++) {
    const zx = 378 + i * 4.85;
    const top = lerp(hist, zx);
    const m = map([zx, top]);
    el(svg, 'rect', {
      x: m[0] - 0.9, y: Math.min(m[1], zero), width: 1.8,
      height: Math.max(Math.abs(m[1] - zero), 1),
      fill: top < 503 ? '#e23a3a' : '#12a312'
    });
  }
  line(svg, dif, map, '#222', 2);
  line(svg, dea, map, '#eabc28', 2.4);
})();
```
